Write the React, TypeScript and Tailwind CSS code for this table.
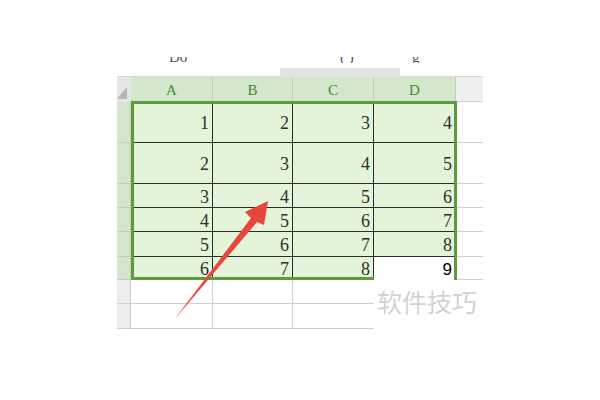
import React from 'react';

const serif = { fontFamily: '"Liberation Serif", "Times New Roman", serif' };

const COLS = ['A', 'B', 'C', 'D'];
const DATA = [
  [1, 2, 3, 4],
  [2, 3, 4, 5],
  [3, 4, 5, 6],
  [4, 5, 6, 7],
  [5, 6, 7, 8],
  [6, 7, 8, 9],
];

function Cell({ value, active }: { value: number; active: boolean }) {
  // active cell (D6) is white, number drawn in a plain sans face
  if (active) {
    return (
      <div className="bg-white flex items-center justify-end pr-[4px] pt-[2px] text-[17px] text-black" style={{ fontFamily: '"Liberation Sans", Arial, sans-serif' }}>
        {value}
      </div>
    );
  }
  return (
    <div className="bg-[#e3f4d8] border-r border-b border-[#2b2b2b] flex items-center justify-end pr-[3px] pt-[3px] text-[18px] text-[#2f2f2f]">
      {value}
    </div>
  );
}

export default function App() {
  return (
    <div className="w-[600px] h-[400px] bg-white relative overflow-hidden" style={serif}>
      <div className="pt-[57px] pl-[117px]">
        <div className="w-[366px]">
          {/* strip above the sheet (cut-off toolbar) */}
          <div className="h-[20px] flex">
            <div className="w-[163px] border-b border-[#d8d8d8] relative overflow-hidden">
              <div className="h-[6px] overflow-hidden">
                <div className="-mt-[11px] pl-[52px] text-[15px] text-[#555]">Do</div>
              </div>
            </div>
            <div className="w-[120px] flex flex-col">
              <div className="h-[6px] overflow-hidden">
                <div className="-mt-[11px] pl-[60px] text-[15px] text-[#555]">( )</div>
              </div>
              <div className="mt-[5px] flex-1 bg-[#e4e4e4]" />
            </div>
            <div className="flex-1 border-b border-[#d8d8d8]">
              <div className="h-[6px] overflow-hidden">
                <div className="-mt-[11px] pl-[12px] text-[15px] text-[#555]">g</div>
              </div>
            </div>
          </div>

          {/* sheet */}
          <div className="relative grid grid-cols-[14px_82px_80px_81px_82px_27px] grid-rows-[25px_41px_41px_24px_24px_25px_23px_24px_25px]">
            {/* header row */}
            <div className="bg-[#e6e6e6] flex items-end justify-start pb-[3px]">
              <svg width="10" height="12" viewBox="0 0 10 12">
                <polygon points="10,0 10,12 0,12" fill="#b5b5b5" />
              </svg>
            </div>
            {COLS.map((c) => (
              <div key={c} className="bg-[#d4e7ca] border-r border-[#bcd1b2] flex items-center justify-center pt-[1px] text-[15px] text-[#3f8f2c]">
                {c}
              </div>
            ))}
            <div className="bg-[#efefef] border-b border-[#d0d0d0]" />

            {/* data rows */}
            {DATA.map((row, r) => (
              <React.Fragment key={r}>
                <div className="bg-[#d5e5cd] border-b border-r border-[#c3d2bc]" />
                {row.map((v, c) => (
                  <Cell key={c} value={v} active={r === 5 && c === 3} />
                ))}
                <div className="bg-white border-b border-[#d0d0d0]" />
              </React.Fragment>
            ))}

            {/* empty rows below */}
            {[0, 1].map((r) => (
              <React.Fragment key={'e' + r}>
                <div className="bg-[#ededed] border-b border-r border-[#d0d0d0]" />
                <div className="bg-white border-b border-r border-[#cfcfcf]" />
                <div className="bg-white border-b border-r border-[#cfcfcf]" />
                <div className="bg-white border-b border-[#cfcfcf]" />
                <div className="bg-white" />
                <div className="bg-white" />
              </React.Fragment>
            ))}

            {/* selection border */}
            <div className="absolute left-[14px] top-[24px] w-[326px] h-[179px] border-l-[3px] border-t-[3px] border-r-[3px] border-[#5b9a3d]" />
            <div className="absolute left-[14px] top-[200px] w-[243px] h-[3px] bg-[#5b9a3d]" />
          </div>
        </div>
      </div>

      {/* watermark */}
      <div
        className="absolute left-[377px] top-[289px] text-[25px] leading-none text-[#d3d3d3]"
        style={{ fontFamily: '"Noto Sans CJK SC", "Noto Sans", sans-serif' }}
      >
        软件技巧
      </div>

      {/* red arrow */}
      <svg className="absolute left-0 top-0 pointer-events-none" width="600" height="400" viewBox="0 0 600 400">
        <polygon points="174,320 251,218 245,212 268,201 264,225 257,222" fill="#e8463d" />
      </svg>
    </div>
  );
}
